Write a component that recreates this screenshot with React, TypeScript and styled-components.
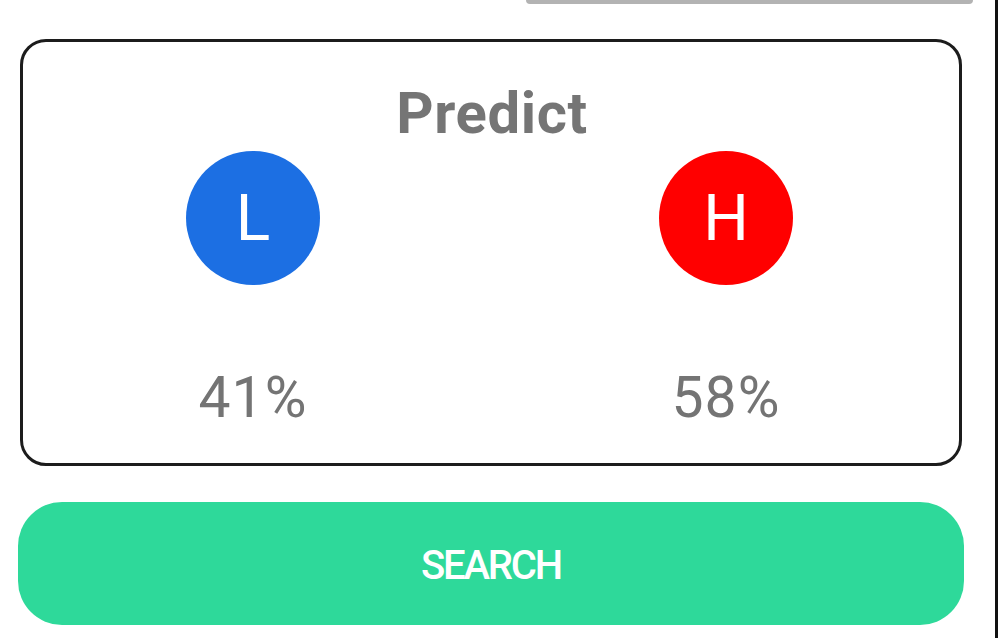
import React from 'react';
import styled, { createGlobalStyle } from 'styled-components';

const GlobalStyle = createGlobalStyle`
	html, body {
		margin: 0;
		padding: 0;
		background: #ffffff;
		font-family: Roboto, "Liberation Sans", Arial, sans-serif;
	}
`;

const Screen = styled.div`
	display: flex;
	width: 1000px;
	height: 638px;
	overflow: hidden;
	background: #ffffff;
`;

const Main = styled.div`
	flex: 1;
	display: flex;
	flex-direction: column;
`;

const EdgeLine = styled.div`
	width: 3px;
	margin-right: 2px;
	background: #111111;
`;

const TopTab = styled.div`
	align-self: flex-end;
	width: 447px;
	height: 4px;
	margin-right: 22px;
	background: #b3b3b3;
	border-radius: 0 0 12px 12px;
`;

const Card = styled.div`
	display: flex;
	flex-direction: column;
	align-items: center;
	height: 427px;
	box-sizing: border-box;
	margin: 35px 33px 0 20px;
	padding-top: 43px;
	border: 3px solid #1c1c1c;
	border-radius: 26px;
`;

const Title = styled.div`
	font-size: 58px;
	line-height: 56px;
	font-weight: 700;
	letter-spacing: 0.6px;
	color: #757575;
	margin-left: 2px;
`;

const Options = styled.div`
	display: flex;
	justify-content: space-between;
	align-self: stretch;
	padding: 0 166px 0 163px;
	margin-top: 10px;
`;

const Option = styled.div`
	display: flex;
	flex-direction: column;
	align-items: center;
	width: 134px;
`;

const Circle = styled.div<{ $color: string }>`
	display: flex;
	align-items: center;
	justify-content: center;
	width: 134px;
	height: 134px;
	border-radius: 50%;
	background: ${(p) => p.$color};
	color: #ffffff;
	font-size: 64px;
	font-weight: 400;
`;

const Percent = styled.div`
	margin-top: 85px;
	font-size: 57px;
	line-height: 56px;
	letter-spacing: 1px;
	color: #747474;
	white-space: nowrap;
`;

const SearchButton = styled.button`
	display: flex;
	align-items: center;
	justify-content: center;
	height: 123px;
	margin: 36px 31px 0 18px;
	padding: 4px 0 0;
	border: none;
	border-radius: 44px;
	background: #2ed99a;
	color: #ffffff;
	font-family: Roboto, "Liberation Sans", Arial, sans-serif;
	font-size: 40px;
	font-weight: 500;
	letter-spacing: -2.2px;
	cursor: pointer;
`;

const options = [
	{ letter: 'L', color: '#1c6fe3', value: 41 },
	{ letter: 'H', color: '#ff0000', value: 58 },
];

export default function App() {
	return (
		<Screen>
			<GlobalStyle />
			<Main>
				<TopTab />
				<Card>
					<Title>Predict</Title>
					<Options>
						{options.map((o) => (
							<Option key={o.letter}>
								<Circle $color={o.color}>{o.letter}</Circle>
								<Percent>{o.value}%</Percent>
							</Option>
						))}
					</Options>
				</Card>
				<SearchButton>SEARCH</SearchButton>
			</Main>
			<EdgeLine />
		</Screen>
	);
}
